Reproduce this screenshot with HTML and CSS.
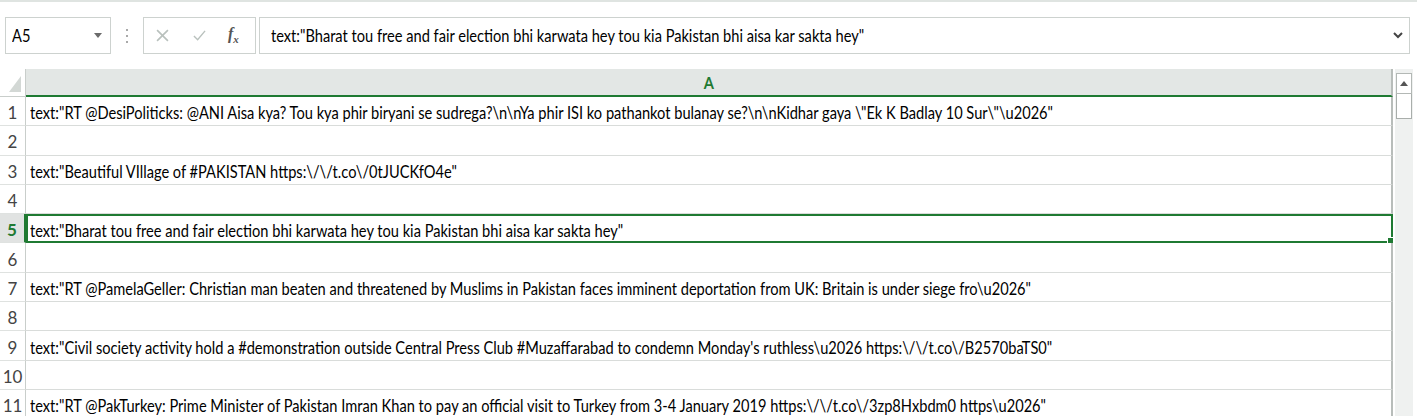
FILE: index.html
```html
<!DOCTYPE html>
<html lang="en">
<head>
  <meta charset="UTF-8" />
  <title>Book1 - Excel</title>
  <link rel="stylesheet" href="styles.css">
</head>
<body>
  <div class="topline"></div>

  <div class="formula-row">
    <div class="namebox">
      <span class="txt">A5</span>
      <svg class="caret" viewBox="0 0 8 5"><path d="M0 0h8L4 5z"/></svg>
    </div>
    <div class="grip"><i></i><i></i><i></i></div>
    <div class="fx-buttons">
      <svg class="btn-icon" viewBox="0 0 12 12"><path d="M1 1l10 10M11 1L1 11" /></svg>
      <svg class="btn-icon" viewBox="0 0 14 12"><path d="M1 6.5l4 4L13 1" /></svg>
      <span class="fx">f<sub>x</sub></span>
    </div>
    <div class="formula">
      <span class="txt">text:"Bharat tou free and fair election bhi karwata hey tou kia Pakistan bhi aisa kar sakta hey"</span>
      <svg class="chev" viewBox="0 0 10 7"><path d="M1 1l4 4 4-4" /></svg>
    </div>
  </div>

  <div class="sheet">
    <div class="grid">
      <div class="corner"><svg viewBox="0 0 12 16"><path d="M12 0v16H0z"/></svg></div>
      <div class="colhead"><span class="txt">A</span></div>

      <div class="rowhead">1</div>
      <div class="cell"><span class="txt">text:"RT @DesiPoliticks: @ANI Aisa kya? Tou kya phir biryani se sudrega?\n\nYa phir ISI ko pathankot bulanay se?\n\nKidhar gaya \"Ek K Badlay 10 Sur\"\u2026"</span></div>
      <div class="rowhead">2</div>
      <div class="cell"></div>
      <div class="rowhead">3</div>
      <div class="cell"><span class="txt">text:"Beautiful VIllage of #PAKISTAN https:\/\/t.co\/0tJUCKfO4e"</span></div>
      <div class="rowhead">4</div>
      <div class="cell"></div>
      <div class="rowhead active">5</div>
      <div class="cell selected"><span class="txt">text:"Bharat tou free and fair election bhi karwata hey tou kia Pakistan bhi aisa kar sakta hey"</span><i class="handle"></i></div>
      <div class="rowhead">6</div>
      <div class="cell"></div>
      <div class="rowhead">7</div>
      <div class="cell"><span class="txt">text:"RT @PamelaGeller: Christian man beaten and threatened by Muslims in Pakistan faces imminent deportation from UK: Britain is under siege fro\u2026"</span></div>
      <div class="rowhead">8</div>
      <div class="cell"></div>
      <div class="rowhead">9</div>
      <div class="cell"><span class="txt">text:"Civil society activity hold a #demonstration outside Central Press Club #Muzaffarabad to condemn Monday's ruthless\u2026 https:\/\/t.co\/B2570baTS0"</span></div>
      <div class="rowhead">10</div>
      <div class="cell"></div>
      <div class="rowhead">11</div>
      <div class="cell"><span class="txt">text:"RT @PakTurkey: Prime Minister of Pakistan Imran Khan to pay an official visit to Turkey from 3-4 January 2019 https:\/\/t.co\/3zp8Hxbdm0 https\u2026"</span></div>
    </div>

    <div class="scrollbar">
      <div class="sb-up"><svg viewBox="0 0 8 5"><path d="M0 5h8L4 0z"/></svg></div>
      <div class="sb-thumb"></div>
    </div>
  </div>
</body>
</html>
```

FILE: styles.css
```css
body {
  margin: 0;
  width: 1417px;
  height: 416px;
  overflow: hidden;
  background: #fff;
  font-family: Lato, "Noto Sans", sans-serif;
  font-size: 17px;
  color: #000;
}
.txt {
  display: inline-block;
  white-space: nowrap;
  transform: scaleX(0.86);
  transform-origin: left center;
}
.topline {
  height: 2px;
  background: #dfe4e1;
}
.formula-row {
  display: flex;
  height: 37px;
  margin-top: 15px;
}
.namebox {
  margin-left: 5px;
  width: 106px;
  box-sizing: border-box;
  border: 1px solid #cdd2cf;
  display: flex;
  align-items: center;
  padding: 0 8px 0 6px;
  justify-content: space-between;
}
.caret {
  width: 8px;
  height: 5px;
  fill: #6b6b6b;
}
.grip {
  width: 32px;
  display: flex;
  flex-direction: column;
  align-items: center;
  justify-content: center;
  gap: 4px;
}
.grip i {
  width: 2px;
  height: 2px;
  background: #a9a9a9;
}
.fx-buttons {
  width: 113px;
  box-sizing: border-box;
  border: 1px solid #cdd2cf;
  display: flex;
  align-items: center;
  padding-left: 12px;
  gap: 24px;
}
.btn-icon {
  width: 13px;
  height: 13px;
  fill: none;
  stroke: #b9c1bd;
  stroke-width: 1.5;
}
.fx {
  font-family: "Liberation Serif", serif;
  font-style: italic;
  font-weight: bold;
  font-size: 16px;
  color: #555;
  margin-left: -2px;
}
.fx sub {
  font-size: 11px;
}
.formula {
  margin-left: 3px;
  margin-right: 7px;
  flex: 1;
  box-sizing: border-box;
  border: 1px solid #cdd2cf;
  display: flex;
  align-items: center;
  justify-content: space-between;
  padding: 0 6px 0 11px;
}
.chev {
  width: 10px;
  height: 7px;
  fill: none;
  stroke: #444;
  stroke-width: 2;
}
.sheet {
  display: flex;
  margin-top: 15px;
}
.grid {
  width: 1393px;
  display: grid;
  grid-template-columns: 26px 1367px;
  grid-template-rows: 28px;
  grid-auto-rows: 29.3px;
}
.corner {
  background: #fff;
  border-right: 1px solid #c9cecb;
  box-sizing: border-box;
  display: flex;
  align-items: flex-end;
  justify-content: flex-end;
  padding: 0 4px 4px 0;
  border-bottom: 1px solid #c9cecb;
}
.corner svg {
  width: 12px;
  height: 16px;
  fill: #d3d8d5;
}
.colhead {
  background: #e3e7e5;
  border-bottom: 2px solid #1e7a32;
  border-right: 2px solid #b8bdba;
  box-sizing: border-box;
  display: flex;
  align-items: center;
  justify-content: center;
  color: #1f7a32;
  font-weight: bold;
}
.colhead .txt {
  transform-origin: center;
}
.rowhead {
  border-right: 1px solid #c9cecb;
  border-bottom: 1px solid #dfe2e0;
  box-sizing: border-box;
  display: flex;
  align-items: center;
  justify-content: center;
  color: #444;
  padding-top: 3px;
}
.rowhead.active {
  background: #e1e3e2;
  color: #1f7a32;
  font-weight: bold;
  border-right: 2px solid #1f7a32;
}
.cell {
  position: relative;
  border-bottom: 1px solid #d9dcda;
  border-right: 2px solid #b8bdba;
  box-sizing: border-box;
  display: flex;
  align-items: center;
  padding: 3px 0 0 4px;
}
.cell.selected {
  border: 2px solid #1f7a32;
  padding-left: 2px;
}
.handle {
  position: absolute;
  right: -3px;
  bottom: -3px;
  width: 5px;
  height: 5px;
  background: #1f7a32;
  border: 1px solid #fff;
}
.scrollbar {
  flex: 1;
  height: 347px;
  background: #eff1f0;
  margin-right: 4px;
  margin-left: 2px;
  padding-top: 4px;
  display: flex;
  flex-direction: column;
  align-items: center;
}
.sb-up {
  width: 16px;
  height: 21px;
  box-sizing: border-box;
  border: 1px solid #b3b8b5;
  background: #fff;
  display: flex;
  align-items: center;
  justify-content: center;
}
.sb-up svg {
  width: 8px;
  height: 5px;
  fill: #555;
}
.sb-thumb {
  width: 16px;
  height: 25px;
  box-sizing: border-box;
  border: 1px solid #a9aeab;
  border-top: none;
  background: #fff;
}
```
